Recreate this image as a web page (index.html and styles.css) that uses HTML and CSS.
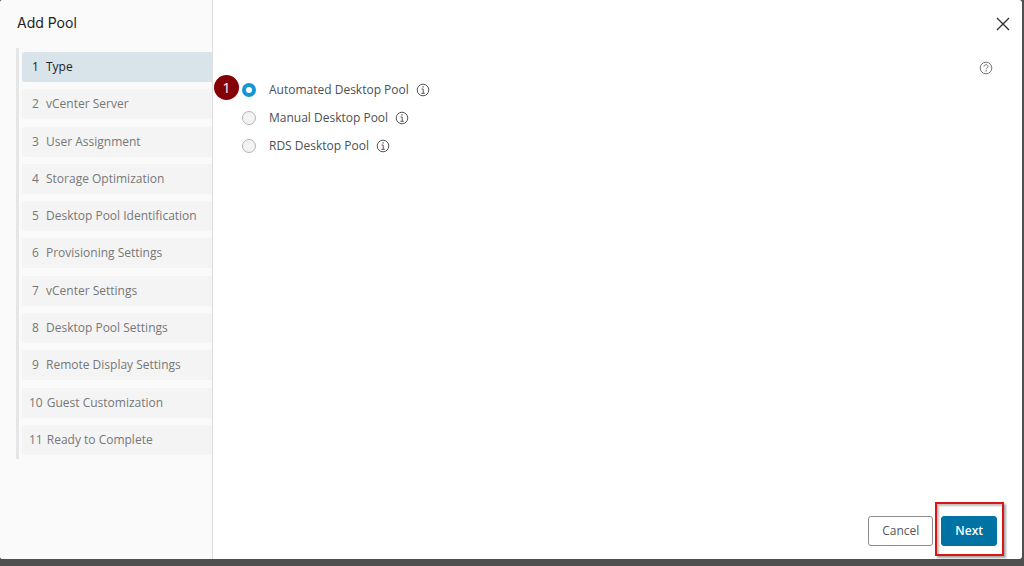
FILE: index.html
```html
<!DOCTYPE html>
<html lang="en">
<head>
    <meta charset="UTF-8">
    <meta name="viewport" content="width=device-width, initial-scale=1.0">
    <title>Add Pool</title>
    <link rel="stylesheet" href="styles.css">
</head>
<body>
    <div class="wizard">
        <aside class="sidebar">
            <h1>Add Pool</h1>
            <ol class="steps">
                <li class="active"><span class="num">1</span><span>Type</span></li>
                <li><span class="num">2</span><span>vCenter Server</span></li>
                <li><span class="num">3</span><span>User Assignment</span></li>
                <li><span class="num">4</span><span>Storage Optimization</span></li>
                <li><span class="num">5</span><span>Desktop Pool Identification</span></li>
                <li><span class="num">6</span><span>Provisioning Settings</span></li>
                <li><span class="num">7</span><span>vCenter Settings</span></li>
                <li><span class="num">8</span><span>Desktop Pool Settings</span></li>
                <li><span class="num">9</span><span>Remote Display Settings</span></li>
                <li><span class="num">10</span><span>Guest Customization</span></li>
                <li><span class="num">11</span><span>Ready to Complete</span></li>
            </ol>
        </aside>
        <main class="content">
            <div class="top">
                <button type="button" class="icon-btn close" aria-label="Close">
                    <svg width="14" height="14" viewBox="0 0 14 14"><path d="M1 1l12 12M13 1L1 13" fill="none" stroke="#333" stroke-width="1.4"/></svg>
                </button>
                <button type="button" class="icon-btn help" aria-label="Help">
                    <svg width="14" height="14" viewBox="0 0 14 14" fill="none" stroke="#777"><circle cx="7" cy="7" r="5.8"/><path d="M5 5.6c0-1.2.9-1.9 2-1.9s2 .7 2 1.7c0 1.3-1.9 1.4-1.9 2.9"/><path d="M6.5 9.9h1.2" stroke-width="1.2"/></svg>
                </button>
            </div>
            <form class="types">
                <div class="option">
                    <span class="marker">1</span>
                    <input type="radio" name="type" id="automated" checked>
                    <label for="automated">Automated Desktop Pool</label>
                    <svg class="info" width="14" height="14" viewBox="0 0 14 14"><circle cx="7" cy="7" r="5.8"/><path d="M5.6 6h1.6v4.2M5.4 10.3h3.4"/><path d="M6.4 3.9h1.3" class="dot"/></svg>
                </div>
                <div class="option">
                    <input type="radio" name="type" id="manual">
                    <label for="manual">Manual Desktop Pool</label>
                    <svg class="info" width="14" height="14" viewBox="0 0 14 14"><circle cx="7" cy="7" r="5.8"/><path d="M5.6 6h1.6v4.2M5.4 10.3h3.4"/><path d="M6.4 3.9h1.3" class="dot"/></svg>
                </div>
                <div class="option">
                    <input type="radio" name="type" id="rds">
                    <label for="rds">RDS Desktop Pool</label>
                    <svg class="info" width="14" height="14" viewBox="0 0 14 14"><circle cx="7" cy="7" r="5.8"/><path d="M5.6 6h1.6v4.2M5.4 10.3h3.4"/><path d="M6.4 3.9h1.3" class="dot"/></svg>
                </div>
            </form>
            <div class="footer">
                <button type="button" class="btn">Cancel</button>
                <div class="highlight">
                    <button type="button" class="btn primary">Next</button>
                </div>
            </div>
        </main>
    </div>
</body>
</html>
```

FILE: styles.css
```css
* {
    box-sizing: border-box;
}
body {
    margin: 0;
    min-height: 100vh;
    display: flex;
    padding: 0 2px 7px 0;
    background: #4f4f4f;
    font-family: "Open Sans", sans-serif;
    font-size: 12px;
    line-height: 18px;
    color: #4c4f55;
}
.wizard {
    flex: 1;
    display: flex;
    background: #fff;
    border-radius: 3px;
    overflow: hidden;
}
.sidebar {
    flex: none;
    width: 213px;
    padding: 13px 0 0 16px;
    background: #fafafa;
    border-right: 1px solid #ddd;
}
.sidebar h1 {
    margin: 0 0 15px;
    padding-left: 1px;
    font-family: Inter, sans-serif;
    font-size: 14px;
    font-weight: 400;
    line-height: 20px;
    color: #222;
}
.steps {
    display: flex;
    flex-direction: column;
    justify-content: space-between;
    min-height: 411px;
    margin: 0;
    padding: 4px 0 4px 3px;
    border-left: 3px solid #e6e6e6;
    list-style: none;
}
.steps li {
    display: flex;
    gap: 4px;
    padding: 6px 6px 6px 7px;
    background: #f4f4f4;
    border-radius: 3px 0 0 3px;
    color: #777;
    white-space: nowrap;
}
.steps li.active {
    background: #d9e4ea;
    color: #222;
}
.num {
    min-width: 13px;
    text-align: center;
}
.content {
    flex: 1;
    display: flex;
    flex-direction: column;
}
.top {
    display: flex;
    flex-direction: column;
    align-items: flex-end;
    gap: 30px;
    padding: 17px 12px 0 0;
}
.icon-btn {
    display: flex;
    padding: 0;
    border: 0;
    background: none;
}
.help {
    margin-right: 17px;
}
.types {
    display: flex;
    flex-direction: column;
    gap: 10px;
    padding: 6px 0 0 29px;
}
.option {
    position: relative;
    display: flex;
    align-items: center;
}
.option input {
    appearance: none;
    width: 14px;
    height: 14px;
    margin: 0 13px 0 0;
    border: 1px solid #b5b5b5;
    border-radius: 50%;
    background: #f3f3f3;
}
.option input:checked {
    border: 4px solid #1a95d3;
    background: #fff;
}
.info {
    margin-left: 7px;
    fill: none;
    stroke: #565656;
}
.info .dot {
    stroke-width: 1.3;
}
.marker {
    position: absolute;
    left: -28px;
    top: -6px;
    width: 25px;
    height: 25px;
    border-radius: 50%;
    background: #840006;
    color: #fff;
    font-size: 14px;
    line-height: 25px;
    text-align: center;
}
.footer {
    display: flex;
    justify-content: flex-end;
    align-items: baseline;
    gap: 2px;
    margin-top: auto;
    padding: 0 18px 3px 0;
}
.btn {
    height: 30px;
    padding: 0 13px;
    border: 1px solid #8c8c8c;
    border-radius: 3px;
    background: #fff;
    color: #565656;
    font: inherit;
}
.btn.primary {
    border-color: #0072a3;
    background: #0072a3;
    color: #fff;
    font-weight: 600;
}
.highlight {
    padding: 12px 5px 8px 4px;
    border: 2px solid #dc1414;
    box-shadow: 2px 2px 2px rgba(0, 0, 0, 0.35), inset 2px 2px 2px rgba(0, 0, 0, 0.25);
}
```
